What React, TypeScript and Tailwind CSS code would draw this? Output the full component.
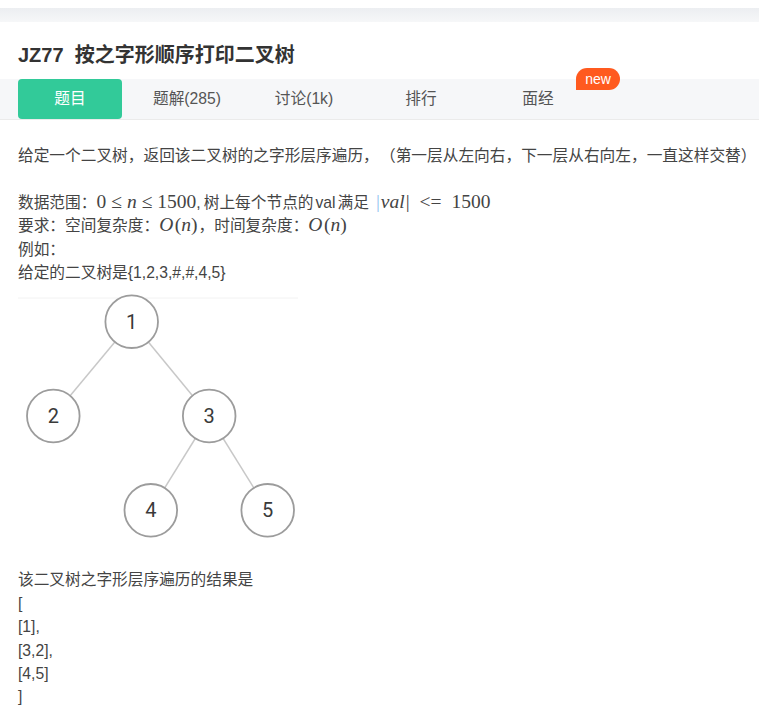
import React from "react";

const M = ({ children }: { children: React.ReactNode }) => (
  <span className="font-['Liberation_Serif','DejaVu_Serif',serif] text-[19.5px] leading-none text-[#444]">
    {children}
  </span>
);
const R = ({ children }: { children: React.ReactNode }) => (
  <span className="mx-[5px]">{children}</span>
);

function Tree() {
  const nodes: [number, number, string][] = [
    [113.7, 28.7, "1"],
    [35.3, 123, "2"],
    [191.2, 123, "3"],
    [132.8, 217.3, "4"],
    [249.7, 217.3, "5"],
  ];
  const edges: [number, number][] = [
    [0, 1],
    [0, 2],
    [2, 3],
    [2, 4],
  ];
  return (
    <svg width="280" height="250" viewBox="0 0 280 250" className="block">
      <line x1="0" y1="5" x2="280" y2="5" stroke="#f2f2f2" strokeWidth="1" />
      {edges.map(([a, b], i) => (
        <line
          key={i}
          x1={nodes[a][0]}
          y1={nodes[a][1]}
          x2={nodes[b][0]}
          y2={nodes[b][1]}
          stroke="#c8c8c8"
          strokeWidth="1.5"
        />
      ))}
      {nodes.map(([x, y, t]) => (
        <g key={t}>
          <circle cx={x} cy={y} r="26.3" fill="#fff" stroke="#9c9c9c" strokeWidth="1.8" />
          <text
            x={x}
            y={y + 7}
            textAnchor="middle"
            fontSize="20"
            fontFamily="Roboto, 'Liberation Sans', sans-serif"
            fill="#3a3a3a"
          >
            {t}
          </text>
        </g>
      ))}
    </svg>
  );
}

const On = () => (
  <M>
    <i>O</i>
    <span className="ml-[1.5px]">(</span>
    <i>n</i>
    <span className="mr-[1px]">)</span>
  </M>
);

export default function App() {
  const tabs = ["题目", "题解(285)", "讨论(1k)", "排行", "面经"];
  return (
    <div className="w-[759px] h-[713px] overflow-hidden bg-white font-['Liberation_Sans','Noto_Sans_CJK_SC',sans-serif]">
      <div className="h-[8px] bg-white" />
      <div className="h-[14px] bg-gradient-to-b from-[#eceef1] to-[#f6f7f8]" />
      <div className="h-[57px] flex items-end pb-[10px] px-[18px]">
        <h1 className="text-[20px] leading-[28px] font-bold text-[#333] whitespace-pre">
          JZ77  按之字形顺序打印二叉树
        </h1>
      </div>
      <div className="h-[41px] bg-[#f6f7f9] border-b border-[#ebebeb] flex gap-[13px] px-[18px]">
        {tabs.map((t, i) => (
          <div
            key={t}
            className={
              i === 0
                ? "relative w-[104px] h-[40px] rounded-[4px] bg-[#32ca99] text-white flex items-center justify-center text-[15.7px]"
                : "relative w-[104px] h-[40px] text-[#555] flex items-center justify-center text-[15.7px]"
            }
          >
            {t}
            {i === 4 && (
              <span className="absolute left-[90px] top-[-11px] w-[44px] h-[22px] rounded-[11px] rounded-bl-none bg-[#ff5a1f] text-white text-[14px] leading-[22px] text-center">
                new
              </span>
            )}
          </div>
        ))}
      </div>
      <div className="px-[18px] pt-[24px] text-[15.7px] leading-[23.4px] text-[#444]">
        <div className="whitespace-nowrap">
          给定一个二叉树，返回该二叉树的之字形层序遍历，
          <span className="ml-[9px]">（第一层从左向右，下一层从右向左，一直这样交替）</span>
        </div>
        <div className="h-[23.4px]" />
        <div className="whitespace-nowrap">
          数据范围：
          <M>
            0<R>≤</R>
            <i>n</i>
            <R>≤</R>1500
          </M>
          <span className="mr-[3px]">,</span>树上每个节点的
          <span className="mx-[2px]">val</span>满足
          <span className="ml-[7px]">
            <M>
              <span className="text-[#8fc3f0]">|</span>
              <i className="mx-[1px]">val</i>|<span className="ml-[10px] mr-[10px]">&lt;=</span>1500
            </M>
          </span>
        </div>
        <div className="whitespace-nowrap">
          要求：空间复杂度：
          <On />
          ，时间复杂度：
          <On />
        </div>
        <div>例如：</div>
        <div>给定的二叉树是{"{1,2,3,#,#,4,5}"}</div>
        <div className="mt-[9px]">
          <Tree />
        </div>
        <div className="mt-[25px]">该二叉树之字形层序遍历的结果是</div>
        <div>[</div>
        <div>[1],</div>
        <div>[3,2],</div>
        <div>[4,5]</div>
        <div>]</div>
      </div>
    </div>
  );
}
